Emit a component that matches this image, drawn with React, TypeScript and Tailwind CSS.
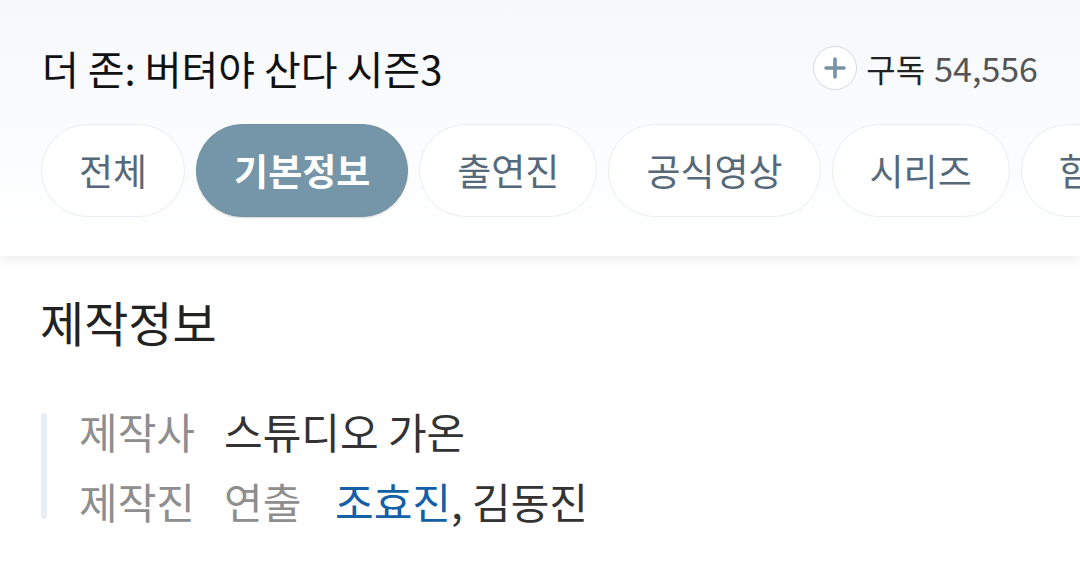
import { FunctionComponent } from "react";

const tabs = ["전체", "기본정보", "출연진", "공식영상", "시리즈", "함께 본 프로그램"];

const Tab: FunctionComponent<{ label: string; active?: boolean }> = ({ label, active }) => (
    <div
        className={`shrink-0 h-[93px] px-[37px] rounded-full flex items-center text-[37px] leading-none whitespace-nowrap ${
            active
                ? "bg-[#7596a9] text-white font-bold border-[1.5px] border-[#6f8fa2] shadow-[0_1px_2px_rgba(0,0,0,0.15)]"
                : "bg-white text-[#56697a] border-[1.5px] border-[#e9eef2]"
        }`}
    >
        {label}
    </div>
);

const App: FunctionComponent = () => {
    return (
        <div className="w-[1080px] h-[566px] overflow-hidden bg-white font-['Noto_Sans_CJK_KR','Noto_Sans',sans-serif]">
            <header className="relative z-10 bg-gradient-to-b from-[#f6f8fb] to-white shadow-[0_4px_10px_rgba(0,0,0,0.07)]">
                <div className="h-[124px] pt-[12px] pl-[42px] pr-[42px] flex items-center justify-between">
                    <h1 className="text-[40px] text-[#111] leading-none">더 존: 버텨야 산다 시즌3</h1>
                    <div className="flex items-center gap-[9px]">
                        <div className="w-[44px] h-[44px] rounded-full border-[1.5px] border-[#d3dce3] bg-white flex items-center justify-center">
                            <svg width="22" height="22" viewBox="0 0 22 22">
                                <path d="M11 2v18M2 11h18" stroke="#7793a6" strokeWidth="3.6" strokeLinecap="round" />
                            </svg>
                        </div>
                        <span className="text-[32px] leading-none text-[#222]">구독</span>
                        <span className="text-[34px] leading-none text-[#555]">54,556</span>
                    </div>
                </div>
                <nav className="flex gap-[11px] pl-[41px] pb-[39px] overflow-hidden">
                    {tabs.map((t) => (
                        <Tab key={t} label={t} active={t === "기본정보"} />
                    ))}
                </nav>
            </header>
            <section className="px-[41px] pt-[36px]">
                <h2 className="text-[48px] leading-[58px] text-[#222] -ml-[1px]">제작정보</h2>
                <div className="flex mt-[46px]">
                    <div className="w-[6px] rounded-full bg-[#e8edf1] my-[17px] mr-[32px]" />
                    <div className="text-[42px] leading-[70px]">
                        <div className="flex">
                            <span className="w-[145px] text-[#8e8e8e]">제작사</span>
                            <span className="text-[#333]">스튜디오 가온</span>
                        </div>
                        <div className="flex">
                            <span className="w-[145px] text-[#8e8e8e]">제작진</span>
                            <span className="w-[111px] text-[#8e8e8e]">연출</span>
                            <span className="text-[#333]">
                                <span className="text-[#1360a6]">조효진</span>, 김동진
                            </span>
                        </div>
                    </div>
                </div>
            </section>
        </div>
    );
};

export default App;
